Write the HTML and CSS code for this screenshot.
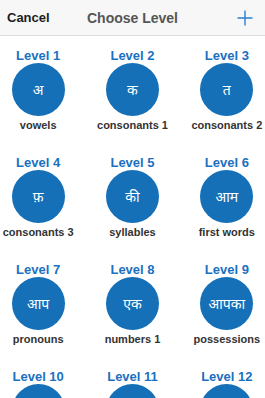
FILE: index.html
```html
<!DOCTYPE html>
<html lang="en">
<head>
  <meta charset="UTF-8" />
  <meta name="viewport" content="width=device-width, initial-scale=1.0" />
  <title>Choose Level</title>
  <link rel="stylesheet" href="styles.css">
</head>
<body>
  <div class="topbar">
    <a class="cancel" href="#">Cancel</a>
    <h1>Choose Level</h1>
    <a class="add" href="#">
      <svg width="16" height="16" viewBox="0 0 16 16"><path d="M8 0.5v15M0.5 8h15" stroke="#2a7fd4" stroke-width="1.4" fill="none"/></svg>
    </a>
  </div>

  <div class="levels">
    <div class="level"><span class="name">Level 1</span><div class="circle">अ</div><span class="desc">vowels</span></div>
    <div class="level"><span class="name">Level 2</span><div class="circle">क</div><span class="desc">consonants 1</span></div>
    <div class="level"><span class="name">Level 3</span><div class="circle">त</div><span class="desc">consonants 2</span></div>
    <div class="level"><span class="name">Level 4</span><div class="circle">फ़</div><span class="desc">consonants 3</span></div>
    <div class="level"><span class="name">Level 5</span><div class="circle">की</div><span class="desc">syllables</span></div>
    <div class="level"><span class="name">Level 6</span><div class="circle">आम</div><span class="desc">first words</span></div>
    <div class="level"><span class="name">Level 7</span><div class="circle">आप</div><span class="desc">pronouns</span></div>
    <div class="level"><span class="name">Level 8</span><div class="circle">एक</div><span class="desc">numbers 1</span></div>
    <div class="level"><span class="name">Level 9</span><div class="circle">आपका</div><span class="desc">possessions</span></div>
    <div class="level"><span class="name">Level 10</span><div class="circle">घर</div><span class="desc">home</span></div>
    <div class="level"><span class="name">Level 11</span><div class="circle">खाना</div><span class="desc">food</span></div>
    <div class="level"><span class="name">Level 12</span><div class="circle">रंग</div><span class="desc">colours</span></div>
  </div>
</body>
</html>
```
FILE: styles.css
```css
html, body {
  margin: 0;
  height: 100%;
  overflow: hidden;
  background: white;
  font-family: 'Liberation Sans', Arial, 'Noto Sans', sans-serif;
}
.topbar {
  height: 35px;
  background: #f7f7f7;
  border-bottom: 1px solid #dcdcdc;
  display: flex;
  align-items: center;
  justify-content: space-between;
  padding: 0 12px 0 7px;
  position: relative;
}
.cancel {
  color: #1c1c1c;
  font-size: 13px;
  font-weight: bold;
  text-decoration: none;
}
.topbar h1 {
  position: absolute;
  left: 0;
  right: 0;
  margin: 0;
  text-align: center;
  font-size: 14px;
  font-weight: bold;
  color: #555;
  pointer-events: none;
}
.add {
  display: flex;
  margin-top: 1px;
}
.levels {
  display: grid;
  grid-template-columns: repeat(3, 1fr);
  margin: 0 -9px;
  padding-top: 12px;
  row-gap: 22px;
}
.level {
  display: flex;
  flex-direction: column;
  align-items: center;
}
.name {
  color: #1b70c1;
  font-size: 13px;
  font-weight: bold;
  line-height: 15px;
}
.circle {
  width: 53px;
  height: 53px;
  border-radius: 50%;
  background: #1570b8;
  color: white;
  display: flex;
  align-items: center;
  justify-content: center;
  font-family: 'Noto Sans', 'Liberation Sans', sans-serif;
  font-size: 14px;
}
.desc {
  color: #333;
  font-size: 11px;
  font-weight: bold;
  line-height: 16px;
  margin-top: 1px;
}
```
